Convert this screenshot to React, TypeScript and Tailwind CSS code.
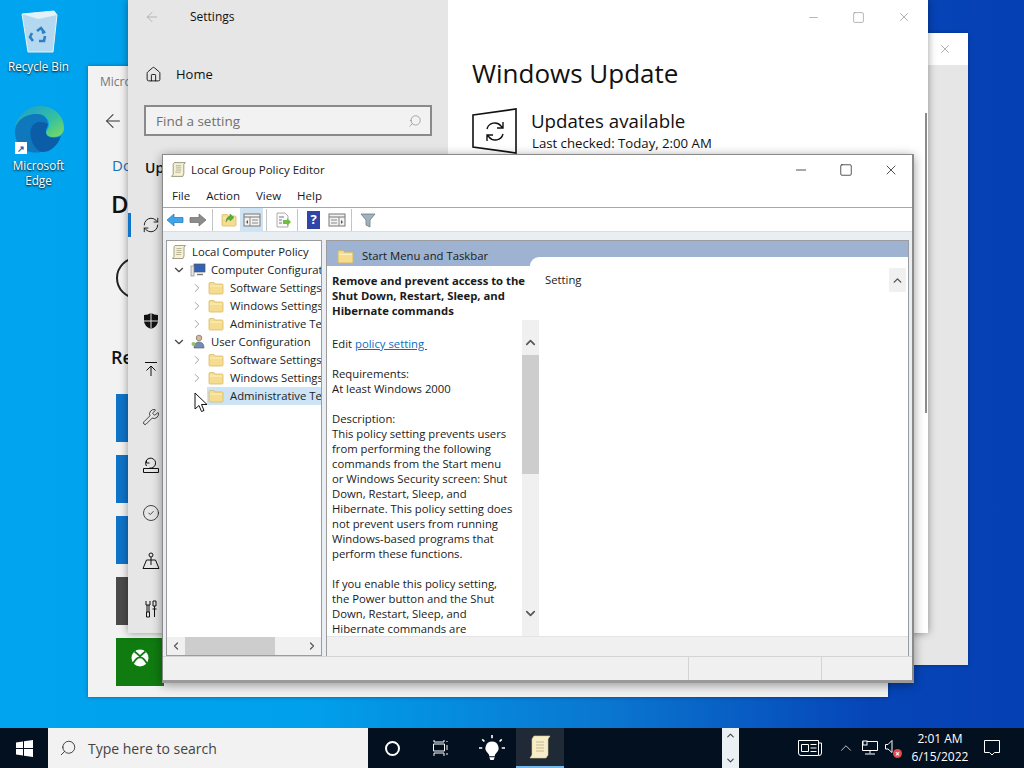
import React from "react";
import { ArrowLeft, Home, Search, Minus, Square, X, ChevronDown, ChevronRight, ChevronUp, ChevronLeft, RefreshCw, Wrench, CircleCheck } from "lucide-react";

const font = { fontFamily: '"Open Sans","Noto Sans",sans-serif' };

function Scroll({ s = 16 }: { s?: number }) {
  return (
    <svg width={s} height={s} viewBox="0 0 16 16">
      <path d="M4 1.500h10.500l-1.500 1.500v9l-1 2.500H1.500l1.500-2V3z" fill="#f6f0d4" stroke="#8d8a70" strokeWidth="0.8" />
      <path d="M5.500 4.500h5M5.500 6.500h5M5.500 8.500h5M5 10.500h5" stroke="#a9a486" strokeWidth="0.8" />
    </svg>
  );
}

function Folder({ s = 16, up }: { s?: number; up?: boolean }) {
  return (
    <svg width={s} height={s} viewBox="0 0 16 16">
      <path d="M1 3.500q0-1 1-1h4l1 1.500h7q1 0 1 1v8q0 1-1 1H2q-1 0-1-1z" fill="#f6dc8e" stroke="#d8bb64" strokeWidth="0.8" />
      <path d="M2 5.500h12v1H2z" fill="#fcf1c8" />
      {up && <path d="M5 10q0-5 4-6V2l4 3.500L9 9V7q-3 0-4 3z" fill="#58b03c" stroke="#3f8a2a" strokeWidth="0.5" />}
    </svg>
  );
}

function TreeRow({ indent, arrow, icon, label, selected, wide }: { indent: string; arrow?: "down" | "right"; icon: React.ReactNode; label: string; selected?: boolean; wide?: boolean }) {
  return (
    <div className={`flex h-[18px] items-center whitespace-nowrap ${indent}`}>
      <span className="flex w-[16px] shrink-0 items-center justify-center">
        {arrow === "down" && <ChevronDown size={14} strokeWidth={2} className="text-[#444]" />}
        {arrow === "right" && <ChevronRight size={14} strokeWidth={1.7} className="text-[#a0a0a0]" />}
      </span>
      <span className={`ml-[2px] flex h-[18px] min-w-0 flex-1 items-center overflow-hidden pl-[1px] ${wide ? "gap-[6px]" : "gap-[5px]"} ${selected ? "bg-[#cde4f7]" : ""}`}>
        <span className="flex w-[16px] shrink-0 items-center justify-center">{icon}</span>
        <span className="text-[#222]">{label}</span>
      </span>
    </div>
  );
}

function CompIcon() {
  return (
    <svg width="16" height="16" viewBox="0 0 16 16">
      <rect x="4" y="2" width="11" height="8" fill="#2f62b8" stroke="#555" strokeWidth="0.7" />
      <rect x="1" y="4" width="3" height="10" fill="#e6e6e6" stroke="#888" strokeWidth="0.7" />
      <path d="M7 12.500h6" stroke="#777" strokeWidth="1.400" />
    </svg>
  );
}

function UserIcon() {
  return (
    <svg width="16" height="16" viewBox="0 0 16 16">
      <circle cx="9" cy="4" r="2.800" fill="#d9b99a" stroke="#5b5b5b" strokeWidth="0.6" />
      <path d="M4 14q0-6 5-6t5 6z" fill="#6f8fb5" stroke="#555" strokeWidth="0.6" />
      <circle cx="3.500" cy="10" r="2" fill="#9bbf6e" />
    </svg>
  );
}

function Desktop({ top, label, children }: { top: string; label: React.ReactNode; children: React.ReactNode }) {
  return (
    <div className={`absolute left-0 flex w-[77px] flex-col items-center ${top}`}>
      {children}
      <div className="text-center text-[11.7px] leading-[15px] text-white [text-shadow:0_1px_2px_#000]">{label}</div>
    </div>
  );
}

const desc = [
  ["This policy setting prevents users", "from performing the following", "commands from the Start menu", "or Windows Security screen: Shut", "Down, Restart, Sleep, and", "Hibernate. This policy setting does", "not prevent users from running", "Windows-based programs that", "perform these functions."],
  ["If you enable this policy setting,", "the Power button and the Shut", "Down, Restart, Sleep, and", "Hibernate commands are"],
];

function Line({ children }: { children?: React.ReactNode }) {
  return <div className="h-[15px] whitespace-nowrap">{children}</div>;
}

function Divider() {
  return <span className="ml-[3px] mr-[4px] h-[22px] w-px bg-[#c4c4c4]" />;
}

function ToolBtn({ children, active }: { children: React.ReactNode; active?: boolean }) {
  return <span className={`flex h-[24px] w-[23px] items-center justify-center ${active ? "bg-[#cfe3f3]" : ""}`}>{children}</span>;
}

function PanelIcon({ flip }: { flip?: boolean }) {
  return (
    <svg width="18" height="16" viewBox="0 0 18 16">
      <rect x="1" y="2" width="16" height="12" fill="#f2f2f2" stroke="#777" />
      <path d="M1 5h16" stroke="#777" />
      <path d={flip ? "M11 5v9M3 8h6M3 11h6" : "M7 5v9M9 8h6M9 11h6"} stroke="#888" />
      <path d={flip ? "M13 8v4l2-2z" : "M5 8v4l-2-2z"} fill="#555" />
    </svg>
  );
}

function NavRow({ children }: { children: React.ReactNode }) {
  return <div className="flex h-[48px] items-center pl-[14px]">{children}</div>;
}

const navStroke = { fill: "none", stroke: "#111", strokeWidth: 1 };

export default function App() {
  return (
    <div style={font} className="relative h-[768px] w-[1024px] overflow-hidden bg-[linear-gradient(90deg,#00a4ef_0%,#01a0ec_30%,#0a75cf_60%,#0645b8_85%,#0540b4_100%)]">
      <Desktop top="top-[8px]" label="Recycle Bin">
        <svg width="40" height="46" viewBox="0 0 40 46" className="mb-[5px]">
          <path d="M3 6l32-3 3 4-4 37H9z" fill="#c6deee" fillOpacity="0.9" stroke="#e8f2f8" />
          <path d="M3 6l16 5 19-4-3-4z" fill="#e5f1f8" />
          <path d="M18 23l4-3 3 4-2 1M26 28l-1 5-5 0M14 33l-3-4 2-4" stroke="#2d7fc8" strokeWidth="2.600" fill="none" />
        </svg>
      </Desktop>
      <Desktop top="top-[105px]" label={<>Microsoft<br />Edge</>}>
        <div className="relative mb-[3px] h-[50px] w-[50px]">
          <svg width="50" height="50" viewBox="0 0 50 50">
            <defs>
              <linearGradient id="e1" x1="0" y1="0" x2="1" y2="1">
                <stop offset="0" stopColor="#1a9bd0" />
                <stop offset="0.6" stopColor="#35c1a0" />
                <stop offset="1" stopColor="#7fdc5c" />
              </linearGradient>
            </defs>
            <path d="M1 27C1 11 13 1 26 1c14 0 24 10 24 22 0 6-5 9-10 9-6 0-8-2-8-4 0-3 3-4 3-9 0-6-6-10-12-10C12 9 1 16 1 27z" fill="url(#e1)" />
            <path d="M1 27c0-11 10-18 22-18 7 0 11 5 11 10-4-3-14-4-17 4-3 9 3 20 10 24C14 50 1 42 1 27z" fill="#0f78bd" />
            <path d="M17 23c3-8 13-7 17-4 0 3-2 4-2 8 0 6 8 7 15 4-3 10-12 17-20 16-7-3-13-15-10-24z" fill="#0c5da8" />
          </svg>
          <span className="absolute bottom-[1px] left-[1px] flex h-[12px] w-[12px] items-center justify-center bg-white text-[9px] font-bold leading-none text-[#1c5fb0]">↗</span>
        </div>
      </Desktop>

      {/* far back window */}
      <div className="absolute left-[600px] top-[33px] flex h-[632px] w-[368px] flex-col bg-[#e6e6e6] shadow-[0_0_4px_rgba(0,0,0,0.3)]">
        <div className="flex h-[32px] shrink-0 items-center justify-end bg-white pr-[16px]">
          <X size={14} strokeWidth={1} className="text-[#777]" />
        </div>
      </div>

      {/* store window */}
      <div className="absolute left-[88px] top-[66px] flex h-[631px] w-[800px] flex-col bg-[#f2f2f2] shadow-[0_0_4px_rgba(0,0,0,0.35)]">
        <div className="w-[40px] overflow-hidden">
          <div className="flex h-[32px] shrink-0 items-center whitespace-nowrap pl-[12px] text-[12px] text-[#777]">Microsoft Store</div>
          <div className="flex h-[46px] shrink-0 items-center pl-[14px]"><ArrowLeft size={22} strokeWidth={1.1} className="text-[#333]" /></div>
          <div className="mt-[10px] h-[30px] whitespace-nowrap pl-[24px] text-[15px] leading-[22px] text-[#1d6fb5]">Downloads</div>
          <div className="mt-[5px] whitespace-nowrap pl-[23px] text-[24px] font-semibold leading-[30px] text-[#111]">Downloads</div>
          <div className="ml-[28px] mt-[38px] h-[42px] w-[42px] rounded-full border-2 border-[#222]" />
          <div className="mt-[46px] whitespace-nowrap pl-[23px] text-[18px] font-semibold leading-[24px] text-[#111]">Recent</div>
        </div>
        <div className="mt-[25px] flex flex-col gap-[13px] pl-[28px]">
          <div className="h-[48px] w-[40px] bg-[#0f74c8]" />
          <div className="h-[48px] w-[40px] bg-[#0f74c8]" />
          <div className="h-[48px] w-[40px] bg-[#0f74c8]" />
          <div className="h-[48px] w-[40px] bg-[#4a4a4a]" />
          <div className="flex h-[48px] w-[48px] items-start justify-center bg-[#107c10] pt-[11px]">
            <svg width="18" height="18" viewBox="0 0 18 18"><circle cx="9" cy="9" r="8.500" fill="#fff" /><path d="M3.500 2.500Q9 7 9 7.500Q9 7 14.500 2.500M2 14.500Q6 8 9 8.500Q12 8 16 14.500" fill="none" stroke="#107c10" strokeWidth="1.800" /></svg>
          </div>
        </div>
      </div>

      {/* settings */}
      <div className="absolute left-[128px] top-0 flex h-[633px] w-[800px] shadow-[0_0_8px_rgba(0,0,0,0.4)]">
        <div className="flex w-[320px] flex-col bg-[#e6e6e6] text-[#111]">
          <div className="flex h-[34px] shrink-0 items-center">
            <ArrowLeft size={16} strokeWidth={1.2} className="ml-[16px] text-[#a8a8a8]" />
            <span className="ml-[30px] text-[12px] leading-[36px]">Settings</span>
          </div>
          <div className="mt-[23px] flex h-[34px] items-center">
            <Home size={17} strokeWidth={1.3} className="ml-[17px]" />
            <span className="ml-[14px] text-[13px] leading-[32px]">Home</span>
          </div>
          <div className="mx-[16px] mt-[14px] flex h-[31px] items-center justify-between border-2 border-[#8a8a8a] bg-[#f2f2f2] pl-[10px] pr-[8px]">
            <span className="text-[13.500px] leading-[22px] text-[#707070]">Find a setting</span>
            <Search size={14} strokeWidth={1.2} className="-scale-x-100 text-[#888]" />
          </div>
          <div className="mt-[20px] h-[24px] w-[34px] overflow-hidden whitespace-nowrap pl-[17px] text-[14px] font-semibold leading-[24px]">Update &amp; Security</div>
          <div className="mt-[21px] flex flex-col">
            <div className="relative">
              <span className="absolute left-0 top-[12px] h-[24px] w-[3px] bg-[#0f74c8]" />
              <NavRow><RefreshCw size={18} strokeWidth={1.2} /></NavRow>
            </div>
            <NavRow><span className="h-[18px] w-[18px]" /></NavRow>
            <NavRow>
              <svg width="18" height="18" viewBox="0 0 18 18"><path d="M9 1q3 2 7 2v6q0 5-7 8-7-3-7-8V3q4 0 7-2z" fill="#111" /><path d="M9 1v16M2 9h14" stroke="#e6e6e6" strokeWidth="1" /></svg>
            </NavRow>
            <NavRow>
              <svg width="18" height="18" viewBox="0 0 18 18" {...navStroke}><path d="M3 2.500h12M9 16V6M4.500 10.500L9 6l4.500 4.500" /></svg>
            </NavRow>
            <NavRow><Wrench size={18} strokeWidth={1} /></NavRow>
            <NavRow>
              <svg width="18" height="18" viewBox="0 0 18 18" {...navStroke}><path d="M1.500 12.500h15v4h-15zM4.500 10a5 5 0 1 1 3 2M4.500 4v3h3" /></svg>
            </NavRow>
            <NavRow><CircleCheck size={18} strokeWidth={1} /></NavRow>
            <NavRow>
              <svg width="18" height="18" viewBox="0 0 18 18" {...navStroke}><circle cx="9" cy="3" r="2" /><path d="M9 5v8M4.500 8h9L17 16.500H1zM9 8" /></svg>
            </NavRow>
            <NavRow>
              <svg width="18" height="18" viewBox="0 0 18 18" {...navStroke}><path d="M4 1v4h4V1M5 5v7M7 5v7M4.500 12h3v5h-3zM11 1h3v5h-3zM12.500 6v11M10.500 9h4" /></svg>
            </NavRow>
          </div>
        </div>
        <div className="relative flex flex-1 flex-col bg-white text-[#111]">
          <div className="flex h-[34px] shrink-0 items-center justify-end gap-[32px] pr-[17px] text-[#777]">
            <Minus size={13} strokeWidth={1} />
            <Square size={13} strokeWidth={1} />
            <X size={14} strokeWidth={1} />
          </div>
          <div className="mt-[20px] pl-[24px] text-[26px] leading-[38px]">Windows Update</div>
          <div className="mt-[16px] flex pl-[24px]">
            <svg width="46" height="46" viewBox="0 0 46 46">
              <path d="M1 7l43-6v44L1 39z" fill="none" stroke="#111" strokeWidth="1.600" />
              <path d="M15 21a8 8 0 0 1 14-3l2 2M31 26a8 8 0 0 1-14 3l-2-2M31 14v6h-6M15 33v-6h6" fill="none" stroke="#111" strokeWidth="1.400" />
            </svg>
            <div className="ml-[13px]">
              <div className="text-[18.700px] leading-[26px]">Updates available</div>
              <div className="pl-[1px] text-[13.200px] leading-[18px]">Last checked: Today, 2:00 AM</div>
            </div>
          </div>
          <div className="absolute right-[1px] top-[113px] h-[300px] w-[2px] bg-[#8a8a8a]" />
        </div>
      </div>

      {/* GPO */}
      <div className="absolute left-[162px] top-[154px] flex h-[529px] w-[752px] flex-col border border-[#8a8a8a] border-b-[3px] border-b-[#9a9a9a] border-r-[2px] bg-[#f0f0f0] text-[11.300px] text-[#1a1a1a] shadow-[0_2px_10px_rgba(0,0,0,0.4)]">
        <div className="flex h-[29px] shrink-0 items-center bg-white pl-[7px]">
          <Scroll s={17} />
          <span className="ml-[4px] text-[11.500px]">Local Group Policy Editor</span>
          <span className="ml-auto flex items-center gap-[30px] pr-[13px] text-[#111]">
            <Minus size={16} strokeWidth={1.1} />
            <Square size={14} strokeWidth={1.200} />
            <X size={16} strokeWidth={1.1} />
          </span>
        </div>
        <div className="flex h-[24px] shrink-0 items-center gap-[16px] border-b border-[#a8a8a8] bg-white pl-[9px] text-[11.500px]">
          <span>File</span><span>Action</span><span>View</span><span>Help</span>
        </div>
        <div className="flex h-[24px] shrink-0 items-center border-b border-[#dcdcdc] bg-white">
          <ToolBtn>
            <svg width="18" height="14" viewBox="0 0 18 14"><path d="M8 1L1 7l7 6V9.500h9v-5H8z" fill="#3fa5e8" stroke="#1d76b8" strokeWidth="0.7" /></svg>
          </ToolBtn>
          <ToolBtn>
            <svg width="18" height="14" viewBox="0 0 18 14"><path d="M10 1l7 6-7 6V9.500H1v-5h9z" fill="#8c8c8c" stroke="#6a6a6a" strokeWidth="0.7" /></svg>
          </ToolBtn>
          <Divider />
          <ToolBtn><Folder up /></ToolBtn>
          <ToolBtn active><PanelIcon /></ToolBtn>
          <Divider />
          <ToolBtn>
            <svg width="16" height="16" viewBox="0 0 16 16"><path d="M2 1h8l3 3v11H2z" fill="#fafafa" stroke="#999" strokeWidth="0.8" /><path d="M4 5h5M4 8h3M4 11h3" stroke="#777" /><path d="M8 8h4V6l4 4-4 4v-2H8z" fill="#6fbf3f" /></svg>
          </ToolBtn>
          <Divider />
          <ToolBtn>
            <span className="flex h-[18px] w-[13px] items-center justify-center bg-[#2f46a8] text-[13px] font-bold text-white">?</span>
          </ToolBtn>
          <ToolBtn><PanelIcon flip /></ToolBtn>
          <Divider />
          <ToolBtn>
            <svg width="16" height="16" viewBox="0 0 16 16"><path d="M1 2h14L10 8v7l-4-2V8z" fill="#9fb2bd" stroke="#6a7b85" strokeWidth="0.8" /></svg>
          </ToolBtn>
        </div>
        <div className="flex min-h-0 flex-1 gap-[4px] bg-[#e9eef3] px-[3px] pt-[8px]">
          {/* tree */}
          <div className="flex h-[416px] w-[156px] shrink-0 flex-col border border-[#9c9c9c] bg-white">
            <div className="min-h-0 flex-1 overflow-hidden pt-[2px]">
              <div className="flex h-[18px] items-center gap-[5px] pl-[4px]">
                <Scroll s={16} />
                <span className="whitespace-nowrap">Local Computer Policy</span>
              </div>
              <TreeRow indent="pl-[4px]" arrow="down" icon={<CompIcon />} label="Computer Configuration" />
              <TreeRow indent="pl-[22px]" arrow="right" icon={<Folder />} label="Software Settings" wide />
              <TreeRow indent="pl-[22px]" arrow="right" icon={<Folder />} label="Windows Settings" wide />
              <TreeRow indent="pl-[22px]" arrow="right" icon={<Folder />} label="Administrative Templates" wide />
              <TreeRow indent="pl-[4px]" arrow="down" icon={<UserIcon />} label="User Configuration" />
              <TreeRow indent="pl-[22px]" arrow="right" icon={<Folder />} label="Software Settings" wide />
              <TreeRow indent="pl-[22px]" arrow="right" icon={<Folder />} label="Windows Settings" wide />
              <TreeRow indent="pl-[22px]" icon={<Folder />} label="Administrative Templates" selected wide />
            </div>
            <div className="flex h-[18px] shrink-0 items-center bg-[#f0f0f0]">
              <span className="flex w-[18px] justify-center"><ChevronLeft size={12} strokeWidth={2.400} className="text-[#555]" /></span>
              <span className="h-[18px] w-[90px] bg-[#cdcdcd]" />
              <span className="ml-auto flex w-[18px] justify-center"><ChevronRight size={12} strokeWidth={2.400} className="text-[#555]" /></span>
            </div>
          </div>
          {/* right */}
          <div className="flex h-[416px] min-w-0 flex-1 flex-col border border-[#9c9c9c] border-b-0 bg-white">
            <div className="relative flex h-[25px] shrink-0 items-center bg-[#9db3d1] pl-[10px] pt-[6px]">
              <Folder s={17} />
              <span className="ml-[8px]">Start Menu and Taskbar</span>
              <div className="absolute bottom-0 left-[203px] right-0 h-[9px] rounded-tl-[10px] bg-white" />
            </div>
            <div className="flex min-h-0 flex-1">
              <div className="relative w-[212px] shrink-0 overflow-hidden pl-[5px] pt-[7px] leading-[15px]">
                <div className="font-bold">
                  <Line>Remove and prevent access to the</Line>
                  <Line>Shut Down, Restart, Sleep, and</Line>
                  <Line>Hibernate commands</Line>
                </div>
                <div className="h-[18px]" />
                <Line>Edit <span className="text-[#0f6cbd] underline">policy setting&nbsp;</span></Line>
                <Line />
                <Line>Requirements:</Line>
                <Line>At least Windows 2000</Line>
                <Line />
                <Line>Description:</Line>
                {desc[0].map((t) => <Line key={t}>{t}</Line>)}
                <Line />
                {desc[1].map((t) => <Line key={t}>{t}</Line>)}
                <div className="absolute bottom-0 right-0 top-[54px] flex w-[17px] flex-col items-center bg-[#f0f0f0]">
                  <ChevronUp size={15} strokeWidth={2.600} className="mt-[15px] text-[#555]" />
                  <div className="mt-[5px] h-[119px] w-[17px] bg-[#cdcdcd]" />
                  <ChevronDown size={15} strokeWidth={2.600} className="mb-[15px] mt-auto text-[#555]" />
                </div>
              </div>
              <div className="flex min-w-0 flex-1">
                <div className="pl-[6px] pt-[6px] leading-[15px]">Setting</div>
                <div className="ml-auto mr-[2px] mt-[2px] flex h-[24px] w-[17px] items-center justify-center self-start bg-[#f0f0f0]">
                  <ChevronUp size={13} strokeWidth={2.600} className="text-[#555]" />
                </div>
              </div>
            </div>
            <div className="h-[20px] shrink-0 border-t border-[#e4e4e4] bg-[#f0f0f0]" />
          </div>
        </div>
        <div className="flex h-[24px] shrink-0 border-t border-[#d4d4d4] bg-[#f0f0f0]">
          <span className="w-[526px] border-r border-[#d4d4d4]" />
          <span className="w-[133px] border-r border-[#d4d4d4]" />
        </div>
      </div>

      {/* cursor */}
      <svg width="14" height="21" viewBox="0 0 14 21" className="absolute left-[194px] top-[392px]">
        <path d="M1 1v16l4-3.500 2.500 6 2.500-1-2.500-6H13z" fill="#fff" stroke="#111" strokeWidth="1" />
      </svg>

      {/* taskbar */}
      <div className="absolute bottom-0 left-0 flex h-[40px] w-[1024px] items-center bg-[#03101f] text-white">
        <div className="flex w-[48px] justify-center">
          <svg width="17" height="17" viewBox="0 0 17 17" fill="#fff"><path d="M0 2.500l7-1v6.500H0zM8 1.300L17 0v8H8zM0 9h7v6.500l-7-1zM8 9h9v8l-9-1.300z" /></svg>
        </div>
        <div className="flex h-[40px] w-[320px] items-center bg-[#f2f2f2] pl-[11px] text-[#444]">
          <Search size={18} strokeWidth={1.2} className="-scale-x-100 text-[#333]" />
          <span className="ml-[11px] text-[14px]">Type here to search</span>
        </div>
        <div className="flex w-[48px] justify-center"><span className="h-[15px] w-[15px] rounded-full border-2 border-white" /></div>
        <div className="flex w-[48px] justify-center">
          <svg width="17" height="16" viewBox="0 0 17 16" fill="none" stroke="#fff" strokeWidth="1"><path d="M2 0v2h10V0M1.500 4h11v7h-11zM2 16v-3h10v3M15 1v1M15 5v5M15 13v2" /></svg>
        </div>
        <div className="ml-[4px] flex h-[40px] w-[48px] items-center justify-center">
          <svg width="26" height="26" viewBox="0 0 24 24" fill="#fff"><path d="M12 6a6 6 0 0 0-4 10.500c1 1 1.500 2 1.500 3h5c0-1 .5-2 1.500-3A6 6 0 0 0 12 6zM9.500 20.500h5L13.500 23h-3z" /><path d="M12 0v3M3 4l2 2M21 4l-2 2M0 12h3M21 12h3" stroke="#fff" strokeWidth="1.500" /></svg>
        </div>
        <div className="flex h-[40px] w-[48px] items-center justify-center border-b-[2px] border-[#76b9ed] bg-[#1f2a36]">
          <svg width="22" height="24" viewBox="0 0 22 24"><path d="M5 1h16l-2 3v16l-2 3H1l2-3V4z" fill="#f7eec9" stroke="#d9c98d" strokeWidth="0.6" /><path d="M7 7h8M7 10h8M7 13h8M7 16h8" stroke="#c5b88f" /></svg>
        </div>
        <div className="ml-[158px] flex h-[40px] w-[17px] flex-col items-center justify-between bg-[#eaf0f4] py-[2px]">
          <ChevronUp size={11} strokeWidth={2.400} className="text-[#444]" />
          <ChevronDown size={11} strokeWidth={2.400} className="text-[#444]" />
        </div>
        <div className="ml-[58px] flex w-[25px] justify-center">
          <svg width="24" height="16" viewBox="0 0 24 16" fill="none" stroke="#fff" strokeWidth="1"><path d="M.500.500h20v15H3q-2.500 0-2.500-2.500zM20.500 3h3v10q0 2.500-2.500 2.500" /><path d="M3.500 4.500h7v7h-7zM12.500 4.500h6M12.500 8h6M12.500 11.500h6" /></svg>
        </div>
        <ChevronUp size={18} strokeWidth={1} className="ml-[15px]" />
        <svg width="17" height="16" viewBox="0 0 17 16" fill="none" stroke="#fff" strokeWidth="1" className="ml-[7px]"><path d="M.500 1.500h15v9H.500zM8 10.500v3M3 14h10" /><rect x="1" y="1" width="4" height="4" fill="#03101f" /></svg>
        <div className="relative ml-[6px] h-[16px] w-[16px]">
          <svg width="10" height="14" viewBox="0 0 10 14" fill="none" stroke="#fff" strokeWidth="1"><path d="M.500 4.500h2.500L7 .500v12L3 9H.500z" /></svg>
          <span className="absolute bottom-[-2px] right-[-1px] flex h-[9px] w-[9px] items-center justify-center rounded-full bg-[#e5484d] text-[8px] font-bold leading-none text-white">×</span>
        </div>
        <div className="ml-[8px] flex w-[62px] flex-col items-center text-[12px] leading-[18px]">
          <span>2:01 AM</span>
          <span>6/15/2022</span>
        </div>
        <svg width="17" height="16" viewBox="0 0 17 16" fill="none" stroke="#fff" strokeWidth="1" className="ml-[13px]"><path d="M.500.500h15v12h-5L8 15l-2.500-2.500h-5z" /></svg>
      </div>
    </div>
  );
}
